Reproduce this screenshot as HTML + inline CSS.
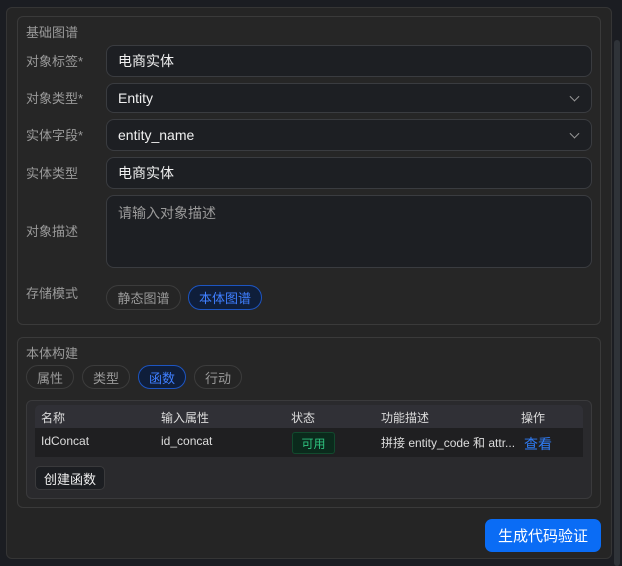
<!DOCTYPE html>
<html><head><meta charset="utf-8"><style>
*{box-sizing:border-box;margin:0;padding:0}
body{width:622px;height:566px;background:#1b1d22;font-family:"Liberation Sans","Noto Sans CJK SC",sans-serif;position:relative;overflow:hidden;color:#e6e6e6}
.abs{position:absolute}
.outer{left:6px;top:7px;width:606px;height:552px;background:#252525;border:1px solid #353535;border-radius:6px}
.sec{background:#262626;border:1px solid #3a3a3a;border-radius:6px}
.lbl{font-size:13px;color:#9a9a9a}
.inp{left:106px;width:486px;background:#1d1f23;border:1px solid #3a3c40;border-radius:8px;font-size:14px;color:#f0f0f0;padding-left:11px;display:flex;align-items:center}
.chev{position:absolute;right:13px;top:50%;width:7px;height:7px;border-right:1.5px solid #999;border-bottom:1.5px solid #999;transform:translateY(-70%) rotate(45deg)}
.pill{border:1px solid #3c3c3c;border-radius:13px;font-size:13px;color:#9a9a9a;display:flex;align-items:center;justify-content:center;background:#252525}
.pill.on{border-color:#1d55c2;background:#0f1e3a;color:#3f7fff}
.th{font-size:12px;color:#dcdcdc}
</style></head><body>
<div class="abs outer"></div>
<div class="abs" style="left:614px;top:40px;width:6px;height:526px;background:#2f3338;border-radius:3px"></div>

<div class="abs sec" style="left:17px;top:16px;width:584px;height:309px"></div>
<div class="abs lbl" style="left:26px;top:22px">基础图谱</div>
<div class="abs lbl" style="left:26px;top:51px">对象标签*</div>
<div class="abs inp" style="top:45px;height:32px">电商实体</div>
<div class="abs lbl" style="left:26px;top:88px">对象类型*</div>
<div class="abs inp" style="top:83px;height:30px">Entity<span class="chev"></span></div>
<div class="abs lbl" style="left:26px;top:125px">实体字段*</div>
<div class="abs inp" style="top:119px;height:32px">entity_name<span class="chev"></span></div>
<div class="abs lbl" style="left:26px;top:163px">实体类型</div>
<div class="abs inp" style="top:157px;height:32px">电商实体</div>
<div class="abs lbl" style="left:26px;top:221px">对象描述</div>
<div class="abs inp" style="top:195px;height:73px;align-items:flex-start;padding-top:7px;color:#9a9a9a">请输入对象描述</div>
<div class="abs lbl" style="left:26px;top:283px">存储模式</div>
<div class="abs pill" style="left:106px;top:285px;width:75px;height:25px">静态图谱</div>
<div class="abs pill on" style="left:188px;top:285px;width:74px;height:25px">本体图谱</div>

<div class="abs sec" style="left:17px;top:337px;width:584px;height:171px"></div>
<div class="abs lbl" style="left:26px;top:343px">本体构建</div>
<div class="abs pill" style="left:26px;top:365px;width:48px;height:24px">属性</div>
<div class="abs pill" style="left:82px;top:365px;width:48px;height:24px">类型</div>
<div class="abs pill on" style="left:138px;top:365px;width:48px;height:24px">函数</div>
<div class="abs pill" style="left:194px;top:365px;width:48px;height:24px">行动</div>

<div class="abs" style="left:26px;top:400px;width:566px;height:99px;background:#2a2a2d;border:1px solid #3a3a3c;border-radius:6px"></div>
<div class="abs" style="left:35px;top:405px;width:548px;height:23px;background:#303036;border-radius:5px 5px 0 0"></div>
<div class="abs" style="left:35px;top:428px;width:548px;height:29px;background:#1f1f21"></div>
<div class="abs th" style="left:41px;top:409px">名称</div>
<div class="abs th" style="left:161px;top:409px">输入属性</div>
<div class="abs th" style="left:291px;top:409px">状态</div>
<div class="abs th" style="left:381px;top:409px">功能描述</div>
<div class="abs th" style="left:521px;top:409px">操作</div>
<div class="abs th" style="left:41px;top:434px">IdConcat</div>
<div class="abs th" style="left:161px;top:434px">id_concat</div>
<div class="abs" style="left:292px;top:432px;width:43px;height:22px;background:#0b2a1c;border:1px solid #124a2e;border-radius:3px;color:#2ec27e;font-size:12px;display:flex;align-items:center;justify-content:center">可用</div>
<div class="abs th" style="left:381px;top:434px">拼接 entity_code 和 attr...</div>
<div class="abs" style="left:524px;top:434px;font-size:14px;color:#2f7cf6">查看</div>
<div class="abs" style="left:35px;top:466px;width:70px;height:24px;background:#1c1e22;border:1px solid #3a3a3c;border-radius:5px;font-size:13px;color:#eee;display:flex;align-items:center;justify-content:center">创建函数</div>

<div class="abs" style="left:485px;top:519px;width:116px;height:33px;background:#0a6cf5;border-radius:7px;color:#fff;font-size:15px;display:flex;align-items:center;justify-content:center">生成代码验证</div>
</body></html>
